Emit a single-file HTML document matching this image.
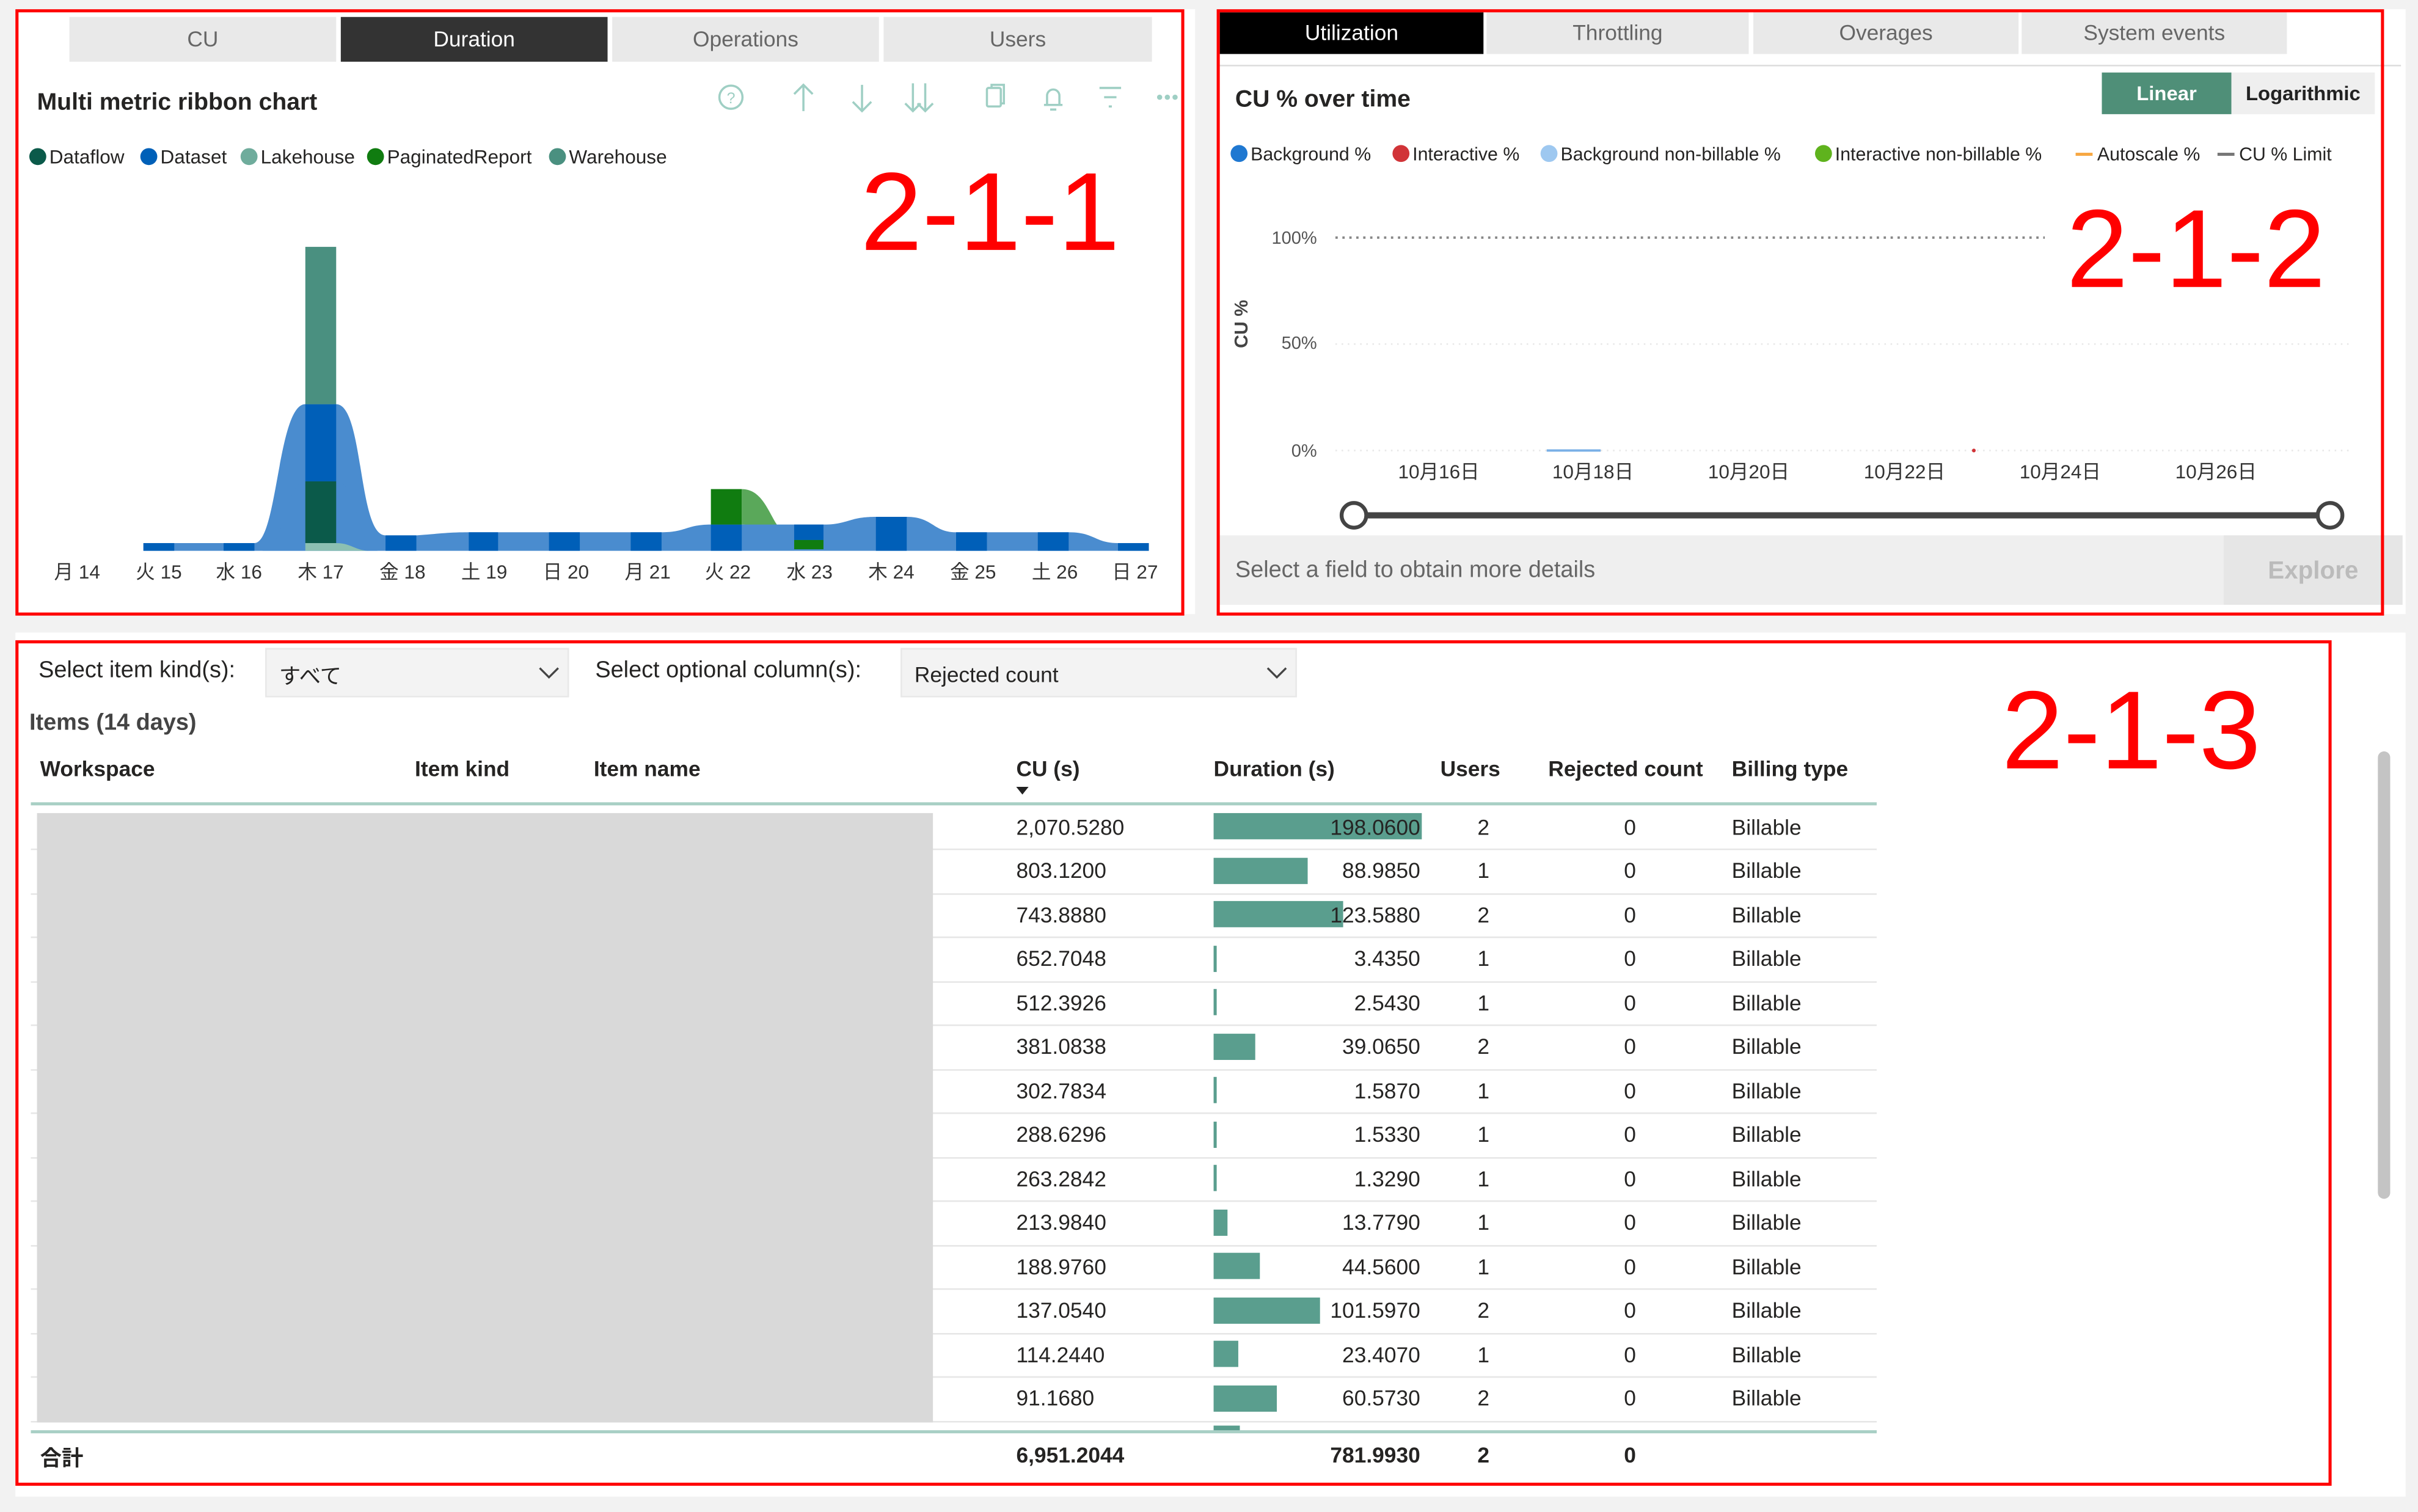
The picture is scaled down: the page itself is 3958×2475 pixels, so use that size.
<!DOCTYPE html>
<html><head><meta charset="utf-8">
<style>
html,body{margin:0;padding:0;background:#f2f2f2;overflow:hidden;width:3958px;height:2475px}
#w{position:absolute;left:0;top:0;width:1568px;height:980px;transform:scale(2.5242,2.5255);transform-origin:0 0;font-family:"Liberation Sans","Noto Sans CJK JP",sans-serif;color:#252423}
.a{position:absolute;white-space:nowrap}
.panel{position:absolute;background:#fff}
.red{position:absolute;border:2px solid #f00;box-sizing:border-box}
.tab{position:absolute;background:#e9e9e9;color:#666;font-size:14px;text-align:center;box-sizing:border-box}
.big{position:absolute;color:#f00;font-size:72px;line-height:1;font-family:"Liberation Sans",sans-serif}
.t{font-size:14px}
.hd{font-size:14px;font-weight:bold}
.rowline{position:absolute;left:20px;width:1197px;height:1px;background:#e6e6e6}
.bar{position:absolute;left:787px;height:17px;background:#5a9e8e}
.dd{position:absolute;background:#f3f3f3;border:1px solid #e8e8e8;box-sizing:border-box;font-size:14px}
.lg{position:absolute;white-space:nowrap;font-size:12.5px}
.dot{display:inline-block;width:11px;height:11px;border-radius:50%;vertical-align:-1px;margin-right:2px}
.ln{display:inline-block;width:11px;height:2px;vertical-align:3px;margin-right:3px}
</style></head><body><div id="w">

<div class="panel" style="left:10px;top:6px;width:765px;height:392px"></div>
<div class="panel" style="left:789px;top:6px;width:771px;height:392px"></div>
<div class="panel" style="left:10px;top:410px;width:1550px;height:560px"></div>

<!-- ========== 2-1-1 ========== -->
<div class="tab" style="left:45px;top:11px;width:173px;height:29px;line-height:29px">CU</div>
<div class="tab" style="left:221px;top:11px;width:173px;height:29px;line-height:29px;background:#333;color:#fff">Duration</div>
<div class="tab" style="left:397px;top:11px;width:173px;height:29px;line-height:29px">Operations</div>
<div class="tab" style="left:573px;top:11px;width:174px;height:29px;line-height:29px">Users</div>
<div class="a" style="left:24px;top:58px;font-size:15.5px;font-weight:bold">Multi metric ribbon chart</div>
<svg class="a" style="left:460px;top:50px" width="310" height="28" viewBox="460 50 310 28" fill="none" stroke="#9fcfc4" stroke-width="1.4">
<circle cx="474" cy="63" r="7.5"/><text x="474" y="67" font-size="10" fill="#9fcfc4" stroke="none" text-anchor="middle" font-family="Liberation Sans">?</text>
<path d="M521 72V55M515 61l6-6 6 6"/>
<path d="M559 55v17M553 66l6 6 6-6"/>
<path d="M592 54v18M600 54v18M587 67l5 5 5-5M595 67l5 5 5-5"/>
<rect x="640" y="57" width="9" height="12" rx="1"/><path d="M643 57v-2h8v12h-2"/>
<path d="M677 68h12M679 68v-6a4 4 0 0 1 8 0v6M681 71h4"/>
<path d="M713 57h14M716 63h8M719 69h2"/>
<circle cx="752" cy="63" r="1" fill="#9fcfc4"/><circle cx="757" cy="63" r="1" fill="#9fcfc4"/><circle cx="762" cy="63" r="1" fill="#9fcfc4"/>
</svg>
<div class="lg" style="left:19px;top:95px"><span class="dot" style="background:#0b5a4a"></span>Dataflow</div>
<div class="lg" style="left:91px;top:95px"><span class="dot" style="background:#0060b8"></span>Dataset</div>
<div class="lg" style="left:156px;top:95px"><span class="dot" style="background:#6fac9c"></span>Lakehouse</div>
<div class="lg" style="left:238px;top:95px"><span class="dot" style="background:#107c10"></span>PaginatedReport</div>
<div class="lg" style="left:356px;top:95px"><span class="dot" style="background:#4a9080"></span>Warehouse</div>
<div class="big" style="left:558px;top:102px">2-1-1</div>

<svg class="a" style="left:0;top:0" width="780" height="400" viewBox="0 0 780 400">
<path d="M481 317 C500 317 500 348 515 348 L534 348 L534 356 L515 356 C500 356 500 340 481 340Z" fill="#5aa85a"/>
<path d="M93 352 L165 352 C180 352 180 262 198 262 L218 262 C236 262 232 347 250 347 L270 347 C285 346 290 345 304 345 L429 345 C445 345 445 340 461 340 L534 340 C550 340 550 335 568 335 L588 335 C605 335 605 345 620 345 L693 345 C710 345 710 352 725 352 L745 352 L745 357 L93 357Z" fill="#4a8ccf"/>
<path d="M170 357 C185 357 185 312 198 312 L218 312 C232 312 232 357 245 357Z" fill="#4a8ccf"/>
<g fill="#005fb8">
<rect x="93" y="352" width="20" height="5"/><rect x="145" y="352" width="20" height="5"/>
<rect x="198" y="262" width="20" height="50"/><rect x="250" y="347" width="20" height="10"/>
<rect x="304" y="345" width="19" height="12"/><rect x="356" y="345" width="20" height="12"/>
<rect x="409" y="345" width="20" height="12"/><rect x="461" y="340" width="20" height="17"/>
<rect x="515" y="340" width="19" height="10"/><rect x="568" y="335" width="20" height="22"/>
<rect x="620" y="345" width="20" height="12"/><rect x="673" y="345" width="20" height="12"/>
<rect x="725" y="352" width="20" height="5"/></g>
<rect x="198" y="160" width="20" height="102" fill="#4a9080"/>
<rect x="198" y="312" width="20" height="40" fill="#0b5a4a"/>
<path d="M198 352 L218 352 C228 352 230 357 240 357 L198 357Z" fill="#8cc0b2"/>
<rect x="461" y="317" width="20" height="23" fill="#107c10"/>
<rect x="515" y="350" width="19" height="6" fill="#107c10"/>
<g font-size="12.5" fill="#333" text-anchor="middle" font-family="Liberation Sans,Noto Sans CJK JP,sans-serif">
<text x="50" y="375">月 14</text><text x="103" y="375">火 15</text><text x="155" y="375">水 16</text><text x="208" y="375">木 17</text><text x="261" y="375">金 18</text><text x="314" y="375">土 19</text><text x="367" y="375">日 20</text><text x="420" y="375">月 21</text><text x="472" y="375">火 22</text><text x="525" y="375">水 23</text><text x="578" y="375">木 24</text><text x="631" y="375">金 25</text><text x="684" y="375">土 26</text><text x="736" y="375">日 27</text></g>
</svg>
<div class="red" style="left:10px;top:6px;width:758px;height:393px"></div>

<!-- ========== 2-1-2 ========== -->
<div class="tab" style="left:791px;top:8px;width:171px;height:27px;line-height:27px;background:#000;color:#fff">Utilization</div>
<div class="tab" style="left:964px;top:8px;width:170px;height:27px;line-height:27px">Throttling</div>
<div class="tab" style="left:1137px;top:8px;width:172px;height:27px;line-height:27px">Overages</div>
<div class="tab" style="left:1311px;top:8px;width:172px;height:27px;line-height:27px">System events</div>
<div class="a" style="left:791px;top:42px;width:766px;height:1px;background:#ddd"></div>
<div class="a" style="left:801px;top:56px;font-size:15.5px;font-weight:bold">CU % over time</div>
<div class="a" style="left:1363px;top:47px;width:84px;height:27px;background:#4f8f78;color:#fff;font-size:13px;font-weight:bold;text-align:center;line-height:28px">Linear</div>
<div class="a" style="left:1447px;top:47px;width:93px;height:27px;background:#efefef;color:#222;font-size:13px;font-weight:bold;text-align:center;line-height:28px">Logarithmic</div>
<div class="lg" style="left:798px;top:93px;font-size:12px"><span class="dot" style="background:#1f78d1"></span>Background %</div>
<div class="lg" style="left:903px;top:93px;font-size:12px"><span class="dot" style="background:#d13438"></span>Interactive %</div>
<div class="lg" style="left:999px;top:93px;font-size:12px"><span class="dot" style="background:#9ec8f0"></span>Background non-billable %</div>
<div class="lg" style="left:1177px;top:93px;font-size:12px"><span class="dot" style="background:#5fb31d"></span>Interactive non-billable %</div>
<div class="lg" style="left:1346px;top:93px;font-size:12px"><span class="ln" style="background:#f7a843"></span>Autoscale %</div>
<div class="lg" style="left:1438px;top:93px;font-size:12px"><span class="ln" style="background:#777"></span>CU % Limit</div>
<svg class="a" style="left:789px;top:130px" width="760" height="215" viewBox="789 130 760 215">
<g font-size="11.5" fill="#555" text-anchor="end" font-family="Liberation Sans,sans-serif"><text x="854" y="158">100%</text><text x="854" y="226">50%</text><text x="854" y="296">0%</text></g>
<text transform="translate(809,210) rotate(-90)" font-size="12" font-weight="bold" fill="#444" text-anchor="middle" font-family="Liberation Sans,sans-serif">CU %</text>
<path d="M866 154 H1326" stroke="#888" stroke-width="1.5" stroke-dasharray="1.5 3"/>
<path d="M866 223 H1525" stroke="#e8e8e8" stroke-width="1" stroke-dasharray="1 3"/>
<path d="M866 292 H1525" stroke="#e8e8e8" stroke-width="1" stroke-dasharray="1 3"/>
<path d="M1003 292 H1038" stroke="#7ab0e6" stroke-width="1.5"/>
<circle cx="1280" cy="292" r="1.2" fill="#d13438"/>
<g font-size="12.5" fill="#333" text-anchor="middle" font-family="Liberation Sans,Noto Sans CJK JP,sans-serif"><text x="933" y="310">10月16日</text><text x="1033" y="310">10月18日</text><text x="1134" y="310">10月20日</text><text x="1235" y="310">10月22日</text><text x="1336" y="310">10月24日</text><text x="1437" y="310">10月26日</text></g>
<path d="M878 334 H1511" stroke="#444" stroke-width="4"/>
<circle cx="878" cy="334" r="8" fill="#fff" stroke="#444" stroke-width="2.5"/>
<circle cx="1511" cy="334" r="8" fill="#fff" stroke="#444" stroke-width="2.5"/>
</svg>
<div class="a" style="left:791px;top:347px;width:767px;height:45px;background:#efefef"></div>
<div class="a" style="left:801px;top:361px;font-size:15px;color:#666">Select a field to obtain more details</div>
<div class="a" style="left:1442px;top:347px;width:116px;height:45px;background:#e6e6e6;color:#bbb;font-size:16px;font-weight:bold;text-align:center;line-height:47px">Explore</div>
<div class="big" style="left:1340px;top:126px">2-1-2</div>
<div class="red" style="left:789px;top:6px;width:757px;height:393px"></div>

<!-- ========== 2-1-3 ========== -->
<div class="a t" style="left:25px;top:426px;font-size:15px">Select item kind(s):</div>
<div class="dd" style="left:172px;top:420px;width:197px;height:32px"><span class="a" style="left:8px;top:7px;font-size:14px">すべて</span>
<svg class="a" style="left:176px;top:10px" width="14" height="10"><path d="M1 2l6 6 6-6" stroke="#444" fill="none" stroke-width="1.3"/></svg></div>
<div class="a t" style="left:386px;top:426px;font-size:15px">Select optional column(s):</div>
<div class="dd" style="left:584px;top:420px;width:257px;height:32px"><span class="a" style="left:8px;top:8px;font-size:14px">Rejected count</span>
<svg class="a" style="left:236px;top:10px" width="14" height="10"><path d="M1 2l6 6 6-6" stroke="#444" fill="none" stroke-width="1.3"/></svg></div>
<div class="a" style="left:19px;top:460px;font-size:15px;font-weight:bold;color:#444">Items (14 days)</div>
<div class="a hd" style="left:26px;top:490px">Workspace</div>
<div class="a hd" style="left:269px;top:490px">Item kind</div>
<div class="a hd" style="left:385px;top:490px">Item name</div>
<div class="a hd" style="left:659px;top:490px">CU (s)</div>
<div class="a" style="left:659px;top:510px;width:0;height:0;border-left:4px solid transparent;border-right:4px solid transparent;border-top:5px solid #222"></div>
<div class="a hd" style="left:787px;top:490px">Duration (s)</div>
<div class="a hd" style="left:934px;top:490px">Users</div>
<div class="a hd" style="left:1004px;top:490px">Rejected count</div>
<div class="a hd" style="left:1123px;top:490px">Billing type</div>
<div class="a" style="left:20px;top:520px;width:1197px;height:2px;background:#a8cfc5"></div>

<div id="rows"></div>
<script>
var d=[["2,070.5280","198.0600",2],["803.1200","88.9850",1],["743.8880","123.5880",2],["652.7048","3.4350",1],["512.3926","2.5430",1],["381.0838","39.0650",2],["302.7834","1.5870",1],["288.6296","1.5330",1],["263.2842","1.3290",1],["213.9840","13.7790",1],["188.9760","44.5600",1],["137.0540","101.5970",2],["114.2440","23.4070",1],["91.1680","60.5730",2]];
var h="";
for(var i=0;i<d.length;i++){var c=536+i*28.5;var t=c-8.5;
var bw=Math.max(1.5,parseFloat(d[i][1])/198.06*135);
h+='<div class="bar" style="top:'+(c-9)+'px;width:'+bw+'px"></div>';
h+='<div class="a t" style="left:659px;top:'+t+'px">'+d[i][0]+'</div>';
h+='<div class="a t" style="left:800px;width:121px;text-align:right;top:'+t+'px">'+d[i][1]+'</div>';
h+='<div class="a t" style="left:952px;width:20px;text-align:center;top:'+t+'px">'+d[i][2]+'</div>';
h+='<div class="a t" style="left:1047px;width:20px;text-align:center;top:'+t+'px">0</div>';
h+='<div class="a t" style="left:1123px;top:'+t+'px">Billable</div>';
h+='<div class="rowline" style="top:'+(c+14)+'px"></div>';}
document.getElementById("rows").innerHTML=h;
</script>
<div class="a" style="left:24px;top:527px;width:581px;height:395px;background:#d9d9d9"></div>
<div class="a" style="left:787px;top:924px;width:17px;height:4px;background:#5a9e8e"></div>
<div class="a" style="left:20px;top:927px;width:1197px;height:2px;background:#a8cfc5"></div>
<div class="a hd" style="left:26px;top:935px">合計</div>
<div class="a hd" style="left:659px;top:935px">6,951.2044</div>
<div class="a hd" style="left:800px;width:121px;text-align:right;top:935px">781.9930</div>
<div class="a hd" style="left:952px;width:20px;text-align:center;top:935px">2</div>
<div class="a hd" style="left:1047px;width:20px;text-align:center;top:935px">0</div>
<div class="big" style="left:1298px;top:438px">2-1-3</div>
<div class="a" style="left:1542px;top:487px;width:8px;height:290px;background:#c4c4c4;border-radius:4px"></div>
<div class="red" style="left:10px;top:415px;width:1502px;height:548px"></div>
</div></body></html>
